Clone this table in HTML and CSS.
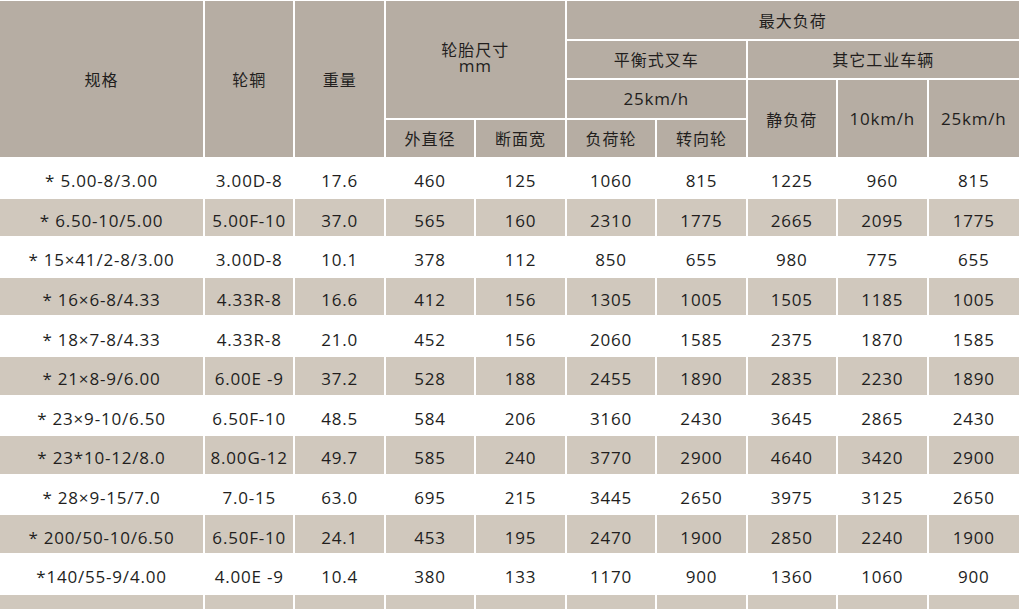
FILE: index.html
```html
<!DOCTYPE html>
<html lang="zh">
<head>
<meta charset="utf-8">
<title>轮胎规格</title>
<link rel="stylesheet" href="styles.css">
</head>
<body>
<table class="spec">
  <colgroup>
    <col class="c-first">
    <col><col><col><col><col><col><col><col><col>
  </colgroup>
  <thead>
    <tr>
      <th rowspan="4">规格</th>
      <th rowspan="4">轮辋</th>
      <th rowspan="4">重量</th>
      <th colspan="2" rowspan="3"><span class="two"><span class="line">轮胎尺寸</span><span class="line unit">mm</span></span></th>
      <th colspan="5" class="last">最大负荷</th>
    </tr>
    <tr>
      <th colspan="2">平衡式叉车</th>
      <th colspan="3" class="last">其它工业车辆</th>
    </tr>
    <tr>
      <th colspan="2" class="num">25km/h</th>
      <th rowspan="2">静负荷</th>
      <th rowspan="2" class="num">10km/h</th>
      <th rowspan="2" class="num last">25km/h</th>
    </tr>
    <tr>
      <th>外直径</th>
      <th>断面宽</th>
      <th>负荷轮</th>
      <th>转向轮</th>
    </tr>
  </thead>
  <tbody>
    <tr><td>* 5.00-8/3.00</td><td>3.00D-8</td><td>17.6</td><td>460</td><td>125</td><td>1060</td><td>815</td><td>1225</td><td>960</td><td class="last">815</td></tr>
    <tr class="alt"><td>* 6.50-10/5.00</td><td>5.00F-10</td><td>37.0</td><td>565</td><td>160</td><td>2310</td><td>1775</td><td>2665</td><td>2095</td><td class="last">1775</td></tr>
    <tr><td>* 15×41/2-8/3.00</td><td>3.00D-8</td><td>10.1</td><td>378</td><td>112</td><td>850</td><td>655</td><td>980</td><td>775</td><td class="last">655</td></tr>
    <tr class="alt"><td>* 16×6-8/4.33</td><td>4.33R-8</td><td>16.6</td><td>412</td><td>156</td><td>1305</td><td>1005</td><td>1505</td><td>1185</td><td class="last">1005</td></tr>
    <tr><td>* 18×7-8/4.33</td><td>4.33R-8</td><td>21.0</td><td>452</td><td>156</td><td>2060</td><td>1585</td><td>2375</td><td>1870</td><td class="last">1585</td></tr>
    <tr class="alt"><td>* 21×8-9/6.00</td><td>6.00E -9</td><td>37.2</td><td>528</td><td>188</td><td>2455</td><td>1890</td><td>2835</td><td>2230</td><td class="last">1890</td></tr>
    <tr><td>* 23×9-10/6.50</td><td>6.50F-10</td><td>48.5</td><td>584</td><td>206</td><td>3160</td><td>2430</td><td>3645</td><td>2865</td><td class="last">2430</td></tr>
    <tr class="alt"><td>* 23*10-12/8.0</td><td>8.00G-12</td><td>49.7</td><td>585</td><td>240</td><td>3770</td><td>2900</td><td>4640</td><td>3420</td><td class="last">2900</td></tr>
    <tr><td>* 28×9-15/7.0</td><td>7.0-15</td><td>63.0</td><td>695</td><td>215</td><td>3445</td><td>2650</td><td>3975</td><td>3125</td><td class="last">2650</td></tr>
    <tr class="alt"><td>* 200/50-10/6.50</td><td>6.50F-10</td><td>24.1</td><td>453</td><td>195</td><td>2470</td><td>1900</td><td>2850</td><td>2240</td><td class="last">1900</td></tr>
    <tr><td>*140/55-9/4.00</td><td>4.00E -9</td><td>10.4</td><td>380</td><td>133</td><td>1170</td><td>900</td><td>1360</td><td>1060</td><td class="last">900</td></tr>
    <tr class="alt"><td></td><td></td><td></td><td></td><td></td><td></td><td></td><td></td><td></td><td class="last"></td></tr>
  </tbody>
</table>
</body>
</html>
```
FILE: styles.css
```css
html, body {
  margin: 0;
  padding: 0;
  background: #ffffff;
  overflow: hidden;
}

body {
  padding-top: 1px;
  font-family: "Open Sans", "Noto Sans CJK SC", sans-serif;
  color: #221e1d;
}

.spec {
  table-layout: fixed;
  width: 1019px;
  border-collapse: separate;
  border-spacing: 0;
}

.c-first {
  width: 205px;
}

.spec th,
.spec td {
  border-right: 2px solid #ffffff;
  border-bottom: 2px solid #ffffff;
  padding: 0;
  text-align: center;
  vertical-align: middle;
  box-sizing: border-box;
  white-space: nowrap;
}

.spec th.last,
.spec td.last {
  border-right: 0;
}

.spec th {
  background: #b6ada3;
  font-family: "Noto Sans CJK SC", "Open Sans", sans-serif;
  font-weight: 400;
  font-size: 16px;
  letter-spacing: 1px;
  height: 39.5px;
}

.spec th.num {
  font-family: "Open Sans", "Noto Sans CJK SC", sans-serif;
  font-size: 17px;
  letter-spacing: 0.8px;
}

.two {
  display: flex;
  flex-direction: column;
  align-items: center;
  margin-top: -4px;
}

.line {
  display: block;
  line-height: 18px;
}

.unit {
  font-family: "Open Sans", sans-serif;
  font-size: 17px;
  line-height: 16px;
  letter-spacing: 0.8px;
}

.spec td {
  font-size: 17px;
  letter-spacing: 0.8px;
  height: 39.6px;
  padding-top: 6px;
}

.spec tr.alt td {
  background: #d0c8bd;
}
```
